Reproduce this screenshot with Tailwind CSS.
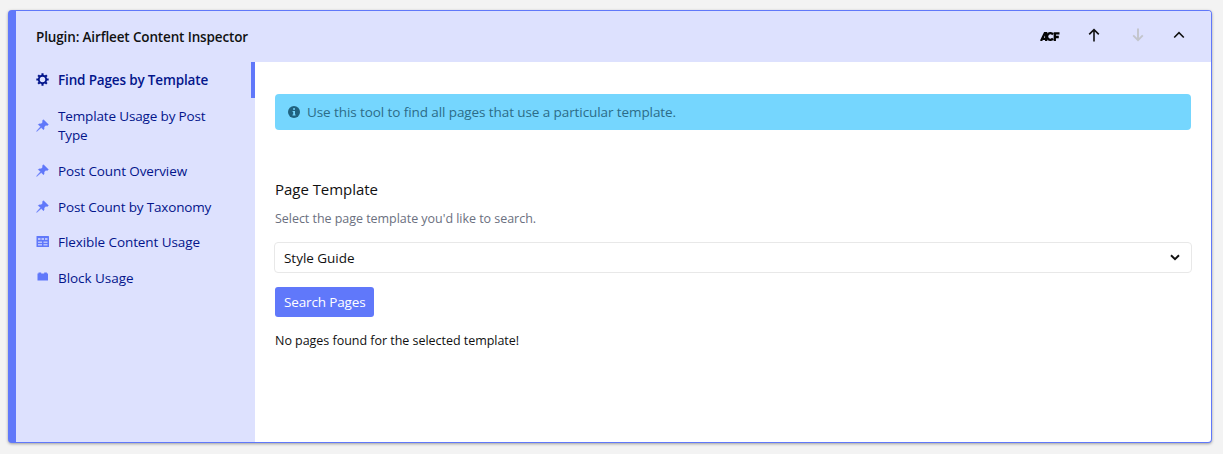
<!DOCTYPE html>
<html lang="en">
<head>
<meta charset="utf-8">
<title>Airfleet Content Inspector</title>
<script src="https://cdn.jsdelivr.net/npm/@tailwindcss/browser@4"></script>
</head>
<body class="h-screen overflow-hidden bg-[#f3f3f3] pt-[10px] pr-[11px] pl-2 font-['Open_Sans',sans-serif] text-[13.5px] text-[#111]">
<svg class="hidden">
  <symbol id="pin" viewBox="0 0 20 20"><path stroke-width=".8" stroke="#6078fa" d="M11.500 1L19 8.500L17.300 10C16 9.500 15 9.700 14.300 10.300L12.300 12.300C12.800 13.800 12.500 15.400 11.500 16.500L8 13L2.300 18.200L1 19L1.800 17.700L7 12L3.500 8.500C4.600 7.500 6.200 7.200 7.700 7.700L9.700 5.700C10.300 5 10.500 4 10 2.700z"/></symbol>
</svg>
<main class="flex h-[433px] flex-col overflow-hidden rounded-[4px] border border-l-8 border-[#6078fa] bg-white shadow-[0_1px_3px_rgba(0,0,0,0.35)]">
  <header class="flex h-[51px] shrink-0 items-center justify-between bg-[#dde1fe] pr-[26px] pl-5">
    <h1 class="pt-[2px] text-[13.5px] font-semibold tracking-[-0.138px]">Plugin: Airfleet Content Inspector</h1>
    <div class="-mt-[3px] flex items-center">
      <svg class="mr-[28px] mt-[3px] h-[9px] w-5" viewBox="0 0 20 9" fill="none" stroke="#050505" stroke-width="2.300"><path d="M1 9L4.800 1.200H6.200V9M3 6.800H7"/><path d="M13 2.500A3.300 3.300 0 1 0 13 6.500"/><path d="M14.800 9V1.300H19.500M14.800 5H18.800"/></svg>
      <svg class="mr-[32px] h-[14px] w-3" viewBox="0 0 12 14" fill="none" stroke="#111" stroke-width="1.6"><path d="M6 13.500V2M1.200 6.400L6 1.600L10.800 6.400"/></svg>
      <svg class="mr-[29px] h-[14px] w-3" viewBox="0 0 12 14" fill="none" stroke="#c3c5cc" stroke-width="1.9"><path d="M6 .5V12M1.200 7.400L6 12.200L10.800 7.400"/></svg>
      <svg class="h-[8px] w-3" viewBox="0 0 12 8" fill="none" stroke="#111" stroke-width="1.600"><path d="M1.200 6.500L6 1.700L10.800 6.500"/></svg>
    </div>
  </header>
  <div class="flex min-h-0 flex-1">
    <nav class="w-[239px] shrink-0 bg-[#dde1fe] leading-[19px] text-[#03158b]">
      <a class="flex h-9 items-center border-r-4 border-[#6078fa] pl-5 font-semibold">
        <svg class="mr-[9px] -mt-px h-[13px] w-[13px]" viewBox="0 0 20 20"><g fill="none" stroke="#03158b"><circle cx="10" cy="10" r="5.700" stroke-width="2.900"/><path d="M10 .5V4M10 16V19.500M.5 10H4M16 10H19.500M3.300 3.300L5.500 5.500M14.500 14.500L16.700 16.700M3.300 16.700L5.500 14.500M14.500 5.500L16.700 3.300" stroke-width="3.200"/></g></svg>
        <span class="tracking-[-0.157px]">Find Pages by Template</span></a>
      <a class="flex items-center pt-[9px] pb-2 pl-5">
        <svg class="mr-[9px] -mt-px h-[13px] w-[13px] fill-[#6078fa]"><use href="#pin"/></svg>
        <span class="tracking-[-0.15px]">Template Usage by Post<br>Type</span></a>
      <a class="flex items-center pt-[9px] pb-2 pl-5">
        <svg class="mr-[9px] -mt-[3px] h-[13px] w-[13px] fill-[#6078fa]"><use href="#pin"/></svg>
        <span class="tracking-[-0.107px]">Post Count Overview</span></a>
      <a class="flex items-center pt-[9px] pb-2 pl-5">
        <svg class="mr-[9px] -mt-[3px] h-[13px] w-[13px] fill-[#6078fa]"><use href="#pin"/></svg>
        <span class="tracking-[-0.165px]">Post Count by Taxonomy</span></a>
      <a class="flex items-center pt-2 pb-[8.400px] pl-5">
        <svg class="mr-[9px] -mt-[3px] h-[11px] w-[13px]" viewBox="0 0 13 11"><rect x=".5" width="12.500" height="11" rx=".5" fill="#6078fa"/><path d="M2 2H4.500V4H2zM5.500 2H8V4H5.500zM9 2H11.500V4H9zM2 5.500H6V7H2zM7.500 5.500H11.500V7H7.500zM2 8H6V9.500H2zM7.500 8H11.500V9.500H7.500z" fill="#b9c3fd"/></svg>
        <span class="tracking-[-0.08px]">Flexible Content Usage</span></a>
      <a class="flex items-center py-[8.400px] pl-5">
        <svg class="mr-[9px] -mt-[3px] h-[9px] w-[13px] fill-[#6078fa]" viewBox="0 0 13 9"><path d="M1.500 1.500H2.500V.5H5.200V1.500H8.200V.5H10.900V1.500H12V8.500H1.500z"/></svg>
        <span class="tracking-[-0.046px]">Block Usage</span></a>
    </nav>
    <section class="flex-1 pt-8 pr-5 pl-5">
      <div class="flex h-9 items-center rounded-[4px] bg-[#75d6fe] pl-[13px] text-[#2c6c88]">
        <svg class="mr-[7px] h-3 w-3" viewBox="0 0 12 12"><circle cx="6" cy="6" r="6" fill="#20627f"/><path d="M5.100 2.200H7V3.800H5.100zM4.600 4.900H7V8.600H7.600V9.600H4.500V8.600H5.200V5.900H4.600z" fill="#75d6fe"/></svg>
        <p class="tracking-[-0.088px]">Use this tool to find all pages that use a particular template.</p>
      </div>
      <h2 class="mt-[47px] text-[15px] leading-6 tracking-[-0.036px]">Page Template</h2>
      <p class="mt-2 text-[12.5px] leading-5 tracking-[-0.037px] text-[#6b7080]">Select the page template you'd like to search.</p>
      <div class="mt-[13px] -mr-px -ml-px flex h-[31px] items-center justify-between rounded-[4px] border border-[#e8e8e8] pr-[11px] pl-[9px]">
        <span class="pt-[2px] tracking-[-0.029px]">Style Guide</span>
        <svg class="h-[7px] w-[10px]" viewBox="0 0 10 7" fill="none" stroke="#111" stroke-width="2"><path d="M1 1.300L5 5.100L9 1.300"/></svg>
      </div>
      <button class="mt-[14px] flex h-[30px] w-[99px] items-center rounded-[3px] bg-[#6078fa] pl-[9px] tracking-[-0.143px] text-white">Search Pages</button>
      <p class="mt-[14px] text-[12.5px] leading-5 tracking-[-0.031px]">No pages found for the selected template!</p>
    </section>
  </div>
</main>
</body>
</html>
